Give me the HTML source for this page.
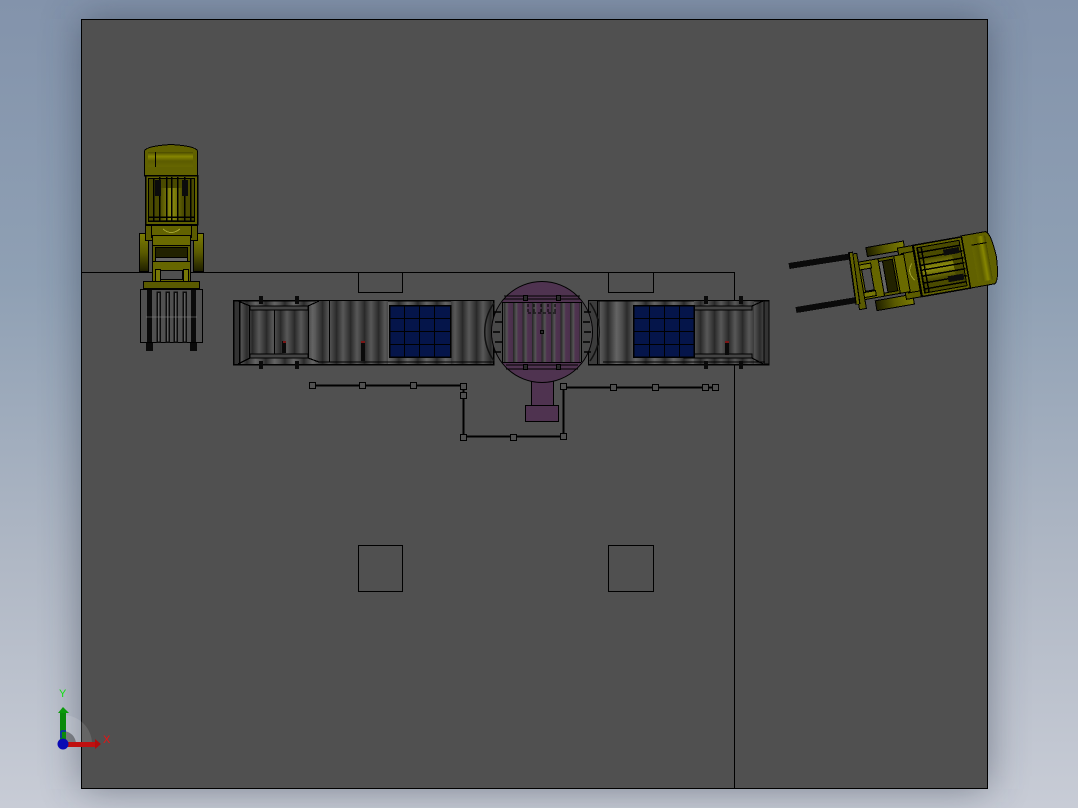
<!DOCTYPE html>
<html><head><meta charset="utf-8"><style>
html,body{margin:0;padding:0;width:1078px;height:808px;overflow:hidden;background:#a0aab8}
svg{display:block}
text{font-family:"Liberation Sans",sans-serif}
</style></head><body>
<svg width="1078" height="808" viewBox="0 0 1078 808" xmlns="http://www.w3.org/2000/svg" shape-rendering="crispEdges">
<defs>
<linearGradient id="bg" x1="0" y1="0" x2="0" y2="1">
<stop offset="0" stop-color="#8393ab"/><stop offset=".35" stop-color="#8fa0b4"/><stop offset=".7" stop-color="#b0b8c5"/><stop offset="1" stop-color="#c8ccd6"/></linearGradient>
<filter id="sh" x="-20%" y="-20%" width="140%" height="140%"><feGaussianBlur stdDeviation="20"/></filter>
<linearGradient id="rl"><stop offset="0" stop-color="#2c2c2c"/><stop offset=".45" stop-color="#646464"/><stop offset=".75" stop-color="#4c4c4c"/><stop offset="1" stop-color="#2a2a2a"/></linearGradient>
<pattern id="rollers" width="19" height="10" patternUnits="userSpaceOnUse"><rect width="19" height="10" fill="url(#rl)"/></pattern>
<linearGradient id="rl2"><stop offset="0" stop-color="#262626"/><stop offset=".5" stop-color="#585858"/><stop offset="1" stop-color="#2e2e2e"/></linearGradient>
<pattern id="rollers2" width="14" height="10" patternUnits="userSpaceOnUse"><rect width="14" height="10" fill="url(#rl2)"/></pattern>
<linearGradient id="rlp"><stop offset="0" stop-color="#222"/><stop offset=".35" stop-color="#555"/><stop offset=".55" stop-color="#4f3350"/><stop offset="1" stop-color="#4a304b"/></linearGradient>
<pattern id="rollersp" width="9.500" height="10" patternUnits="userSpaceOnUse"><rect width="9.500" height="10" fill="url(#rlp)"/></pattern>
<linearGradient id="head" x1="0" y1="0" x2="0" y2="1"><stop offset="0" stop-color="#4a4a00"/><stop offset=".3" stop-color="#868600"/><stop offset=".6" stop-color="#5c5c00"/><stop offset="1" stop-color="#666600"/></linearGradient>
<linearGradient id="wheel" x1="0" y1="0" x2="0" y2="1"><stop offset="0" stop-color="#7c7c04"/><stop offset=".5" stop-color="#5a5a00"/><stop offset="1" stop-color="#1e1e00"/></linearGradient>
<linearGradient id="seat" x1="0" y1="0" x2="1" y2="0"><stop offset="0" stop-color="#4a4a00"/><stop offset=".5" stop-color="#909010"/><stop offset="1" stop-color="#4a4a00"/></linearGradient>
<g id="fork" stroke="#000" stroke-width="1">
<rect x="139.500" y="233.500" width="9" height="38" fill="url(#wheel)"/>
<rect x="193.500" y="233.500" width="10" height="38" fill="url(#wheel)"/>
<path d="M144.500 176 V151 Q146 146 171 144.500 Q196 146 197.500 151 V176Z" fill="#616100"/>
<rect x="148" y="152" width="45" height="15" fill="url(#head)" stroke="none"/>
<path d="M155.500 152V167" fill="none"/>
<rect x="145.500" y="175.500" width="52" height="49" fill="#606000" stroke-width="1.500"/>
<rect x="148.500" y="178.500" width="46" height="43" fill="#4a4a00"/>
<rect x="160" y="188" width="23" height="32" fill="url(#seat)" stroke="none"/>
<path d="M153.500 178V222M159.500 177V222M166.500 177V222M171.500 177V222M177.500 177V222M184.500 177V222M190.500 178V222" fill="none" stroke-width="1.500"/>
<rect x="155" y="180" width="6" height="16" fill="#0c0c0c" stroke="none"/><rect x="182" y="180" width="6" height="16" fill="#0c0c0c" stroke="none"/>
<path d="M148 217H195M149 221H194" fill="none" stroke-width="1.500"/>
<rect x="145.500" y="225.500" width="52" height="15" fill="#5c5c00"/>
<rect x="151.500" y="225.500" width="40" height="12" fill="#626200"/>
<path d="M163 229Q171 236 180 229" fill="none" stroke="#a0a030"/>
<rect x="152.500" y="235.500" width="38" height="10" fill="#6a6a00"/>
<rect x="152.500" y="245.500" width="38" height="27" fill="#5a5a00"/>
<rect x="155.500" y="247.500" width="32" height="10" fill="#222200"/>
<rect x="155.500" y="257.500" width="32" height="4" fill="#666"/>
<rect x="152.500" y="261.500" width="38" height="22" fill="#666600"/>
<rect x="160.500" y="270.500" width="22" height="9" fill="#505050"/>
<rect x="155.500" y="269.500" width="5" height="12" fill="#767606"/><rect x="183.500" y="269.500" width="5" height="12" fill="#767606"/>
<rect x="143.500" y="281.500" width="56" height="7" fill="#5a5a00"/>
</g>
</defs>
<rect width="1078" height="808" fill="url(#bg)"/>
<rect x="81" y="19" width="907" height="770" fill="#2e3848" opacity=".5" filter="url(#sh)"/>
<rect x="81.500" y="19.500" width="906" height="769" fill="#505050" stroke="#000"/>
<path d="M81 272.500H735M734.500 272V788M358.500 272V292.500H402.500V272M608.500 272V292.500H653.500V272" fill="none" stroke="#000"/>
<rect x="358.500" y="545.500" width="44" height="46" fill="none" stroke="#000"/>
<rect x="608.500" y="545.500" width="45" height="46" fill="none" stroke="#000"/>

<!-- left forklift -->
<use href="#fork"/>
<rect x="146" y="342" width="7" height="9" fill="#0a0a0a"/><rect x="190" y="342" width="7" height="9" fill="#0a0a0a"/>
<rect x="140.500" y="289.500" width="62" height="53" fill="#505050" stroke="#000"/>
<g fill="#0a0a0a"><rect x="147" y="290" width="5" height="52"/><rect x="191" y="290" width="5" height="52"/></g>
<g fill="#606060" stroke="#0c0c0c" stroke-width="1.500"><rect x="157" y="292" width="3" height="50"/><rect x="166" y="292" width="3" height="50"/><rect x="174" y="292" width="3" height="50"/><rect x="183" y="292" width="3" height="50"/></g>
<path d="M146 317H197" stroke="#888" stroke-width="1" opacity=".5"/>

<!-- right forklift -->
<g transform="rotate(80 926 269) translate(755 53)"><use href="#fork"/></g>
<path d="M789 266L850 256.500" stroke="#0a0a0a" stroke-width="6" fill="none"/>
<path d="M796 310L857 300" stroke="#0a0a0a" stroke-width="6" fill="none"/>
<path d="M850.500 252L858 304.500" stroke="#000" stroke-width="5" fill="none"/>
<path d="M851 253L858 304" stroke="#626200" stroke-width="2.500" fill="none"/>

<!-- left conveyor -->
<rect x="233.500" y="300.500" width="260" height="64" fill="url(#rollers)" stroke="#000" stroke-width="1.500"/>
<rect x="316" y="301" width="72" height="63" fill="url(#rollers2)"/>
<rect x="451" y="301" width="42" height="63" fill="url(#rollers2)"/>
<rect x="249" y="307" width="60" height="51" fill="url(#rollers2)"/>
<rect x="233.500" y="300.500" width="6" height="64" fill="#333" stroke="#000" stroke-width="1.500"/>
<path d="M238 301L250 306H308L319 301M238 364L250 358H308L319 362M249.500 306V358M274.500 306V358M308.500 306V358M329.500 301V362M318 362H493" fill="none" stroke="#000" stroke-width="1.200"/>
<rect x="250" y="306" width="58" height="4" fill="#444" stroke="#000" stroke-width=".8"/>
<rect x="250" y="354" width="58" height="4" fill="#444" stroke="#000" stroke-width=".8"/>
<g fill="#0a0a0a"><rect x="259" y="296" width="4" height="8"/><rect x="295" y="296" width="4" height="8"/><rect x="259" y="361" width="4" height="8"/><rect x="295" y="361" width="4" height="8"/><rect x="282" y="341" width="4" height="12"/><rect x="361" y="341" width="4" height="20"/></g>
<rect x="361" y="341" width="4" height="2" fill="#7a1515"/>
<rect x="283" y="341" width="3" height="2" fill="#7a1515"/>
<rect x="389.500" y="305.500" width="61" height="51.500" fill="#05154a" stroke="#000" stroke-width="1.500"/>
<path d="M404.500 305V357M419.500 305V357M434.500 305V357M389 318.500H451M389 331.500H451M389 344.500H451" stroke="#000" fill="none"/>

<!-- right conveyor -->
<rect x="588.500" y="300.500" width="180" height="64" fill="url(#rollers)" stroke="#000" stroke-width="1.500"/>
<rect x="694" y="301" width="60" height="63" fill="url(#rollers2)"/>
<rect x="588.500" y="300.500" width="9" height="64" fill="#3c3c3c" stroke="#000"/>
<rect x="764" y="301" width="5" height="63" fill="#333" stroke="#000"/>
<path d="M694 306H752L763 301M684 358H752L763 364M603 362H765M599 301V364" fill="none" stroke="#000" stroke-width="1.200"/>
<rect x="694" y="306" width="58" height="4" fill="#444" stroke="#000" stroke-width=".8"/>
<rect x="684" y="354" width="68" height="4" fill="#444" stroke="#000" stroke-width=".8"/>
<g fill="#0a0a0a"><rect x="704" y="296" width="4" height="8"/><rect x="739" y="296" width="4" height="8"/><rect x="704" y="361" width="4" height="8"/><rect x="739" y="361" width="4" height="8"/><rect x="725" y="341" width="4" height="14"/></g>
<rect x="725" y="341" width="4" height="2" fill="#7a1515"/>
<rect x="633.500" y="305.500" width="60.500" height="51.500" fill="#05154a" stroke="#000" stroke-width="1.500"/>
<path d="M649.500 305V357M664.500 305V357M679.500 305V357M633 318.500H694M633 331.500H694M633 344.500H694" stroke="#000" fill="none"/>

<!-- turntable -->
<g shape-rendering="auto">
<rect x="531.500" y="380" width="22" height="25.500" fill="#4f3350" stroke="#000"/>
<rect x="525.500" y="405.500" width="33" height="16" fill="#4f3350" stroke="#000"/>
<circle cx="542" cy="332" r="50.500" fill="#4f3350" stroke="#000"/>
<clipPath id="cc"><circle cx="542" cy="332" r="50"/></clipPath>
<g clip-path="url(#cc)">
<rect x="490" y="302" width="105" height="60" fill="#484848"/>
<g shape-rendering="crispEdges"><rect x="504" y="302" width="76" height="60" fill="url(#rollersp)"/></g>
</g>
<path d="M494 303A50 50 0 0 0 494 361M590 303A50 50 0 0 1 590 361" fill="none" stroke="#111" stroke-width="1.500"/>
<path d="M502 302.500H581M502 362.500H581M504 296H580M504 299H580M506 365H578M506 369H578" stroke="#000" fill="none"/>
<path d="M502.500 302V362M581.500 302V362" stroke="#000" fill="none"/>
<path d="M493 332h7M494 312h7M494 352h7M584 332h7M584 312h7M584 352h7M495 322h7M495 342h7M583 322h7M583 342h7" stroke="#000" stroke-width="1.500"/>
</g>
<g fill="#2a2a2a" stroke="#000"><rect x="523.500" y="295.500" width="4" height="5"/><rect x="556.500" y="295.500" width="4" height="5"/><rect x="523.500" y="364.500" width="4" height="5"/><rect x="556.500" y="364.500" width="4" height="5"/><rect x="540.500" y="330.500" width="3" height="3"/></g>
<path d="M528 313H557M528 304V313M534 304V313M541 304V313M548 304V313M555 304V313" stroke="#000" stroke-dasharray="3 2" fill="none"/>

<!-- wires -->
<path d="M312 385.500H463M463.500 385V437M463 436.500H563M563.500 437V387M563 387.500H715" fill="none" stroke="#000" stroke-width="2"/>
<g fill="#505050" stroke="#000"><rect x="309.500" y="382.500" width="6" height="6"/><rect x="359.500" y="382.500" width="6" height="6"/><rect x="410.500" y="382.500" width="6" height="6"/><rect x="460.500" y="383.500" width="6" height="6"/><rect x="460.500" y="392.500" width="6" height="6"/><rect x="460.500" y="434.500" width="6" height="6"/><rect x="510.500" y="434.500" width="6" height="6"/><rect x="560.500" y="433.500" width="6" height="6"/><rect x="560.500" y="383.500" width="6" height="6"/><rect x="610.500" y="384.500" width="6" height="6"/><rect x="652.500" y="384.500" width="6" height="6"/><rect x="702.500" y="384.500" width="6" height="6"/><rect x="712.500" y="384.500" width="6" height="6"/></g>

<!-- axes -->
<g shape-rendering="auto">
<path d="M63 744V715A29 29 0 0 1 92 744Z" fill="#fff" opacity=".12"/>
<path d="M63 744V731A13 13 0 0 1 76 744Z" fill="#000" opacity=".35"/>
<rect x="60" y="713" width="6" height="30" fill="#0a8a0a"/>
<path d="M58 713L63 707L69 713Z" fill="#0a9a0a"/>
<rect x="65" y="742" width="33" height="5" fill="#c01010"/>
<path d="M95 739L101 744L95 749Z" fill="#b00d0d"/>
<path d="M61 731H66M61 731V738" stroke="#1020c0" stroke-width="1.500" fill="none"/>
<circle cx="63" cy="744" r="5.500" fill="#0a0ab4"/>
<text x="59" y="697" font-size="11" fill="#10e010">Y</text>
<text x="103" y="743" font-size="11" fill="#f01010">X</text>
</g>
</svg>
</body></html>
